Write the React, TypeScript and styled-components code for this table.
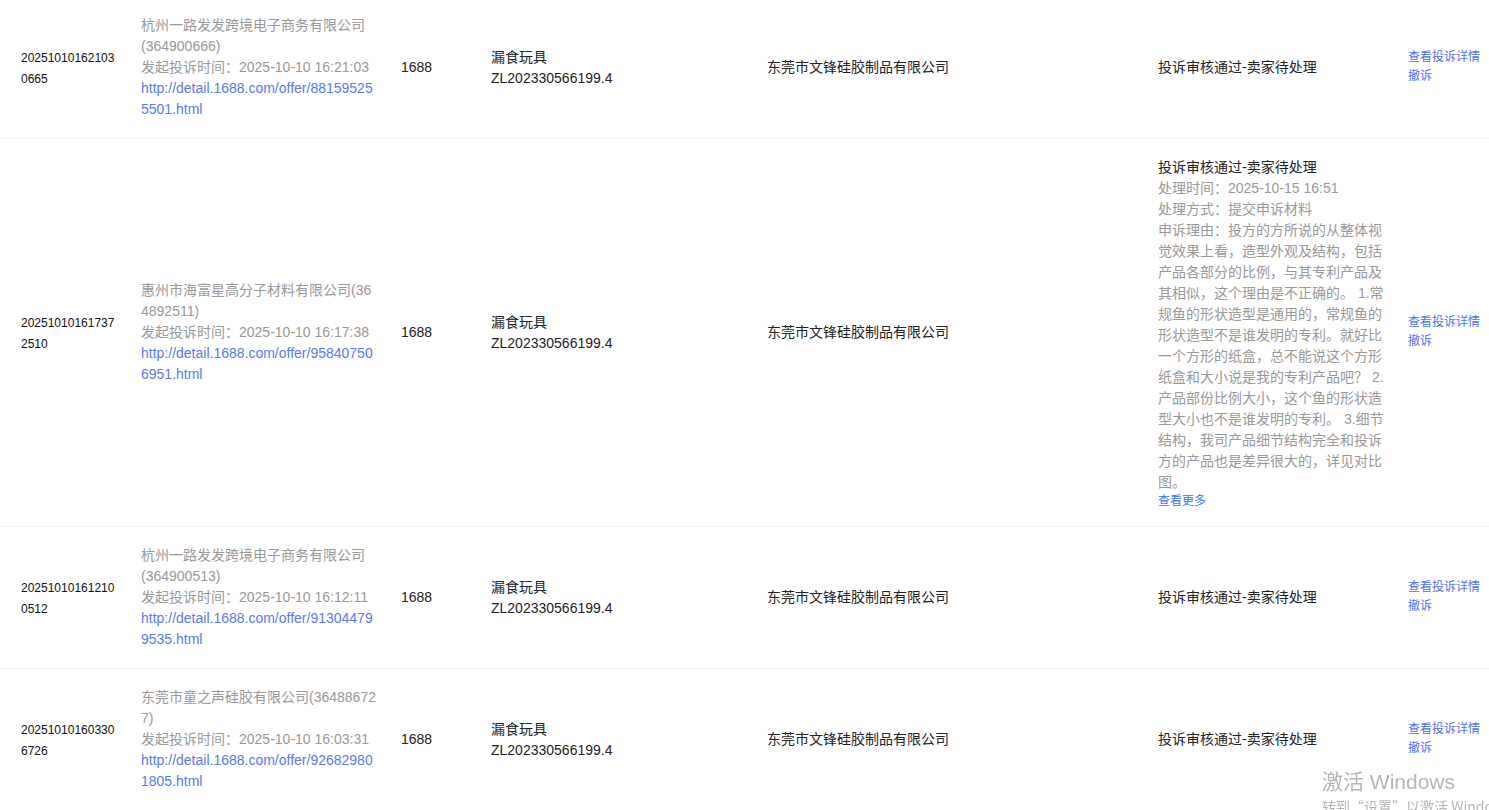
import React from "react";
import styled, { createGlobalStyle } from "styled-components";

const Global = createGlobalStyle`
  html, body { margin: 0; padding: 0; background: #fff; overflow: hidden; }
  body {
    font-family: "Liberation Sans", Arial, "Noto Sans CJK SC", sans-serif;
    color: #333;
  }
`;

const Table = styled.div`
  display: flex;
  flex-direction: column;
  margin-top: -3px;
  width: 1489px;
`;

const Row = styled.div`
  display: grid;
  grid-template-columns: 120px 260px 90px 276px 391px 250px 1fr;
  align-items: center;
  padding: 18px 0 18px 21px;
  border-bottom: 1px solid #f0f0f0;
`;

const OrderId = styled.div`
  font-size: 12px;
  line-height: 21px;
  padding-top: 2px;
  color: #111;
  width: 96px;
  word-break: break-all;
`;

const Info = styled.div`
  font-size: 14px;
  line-height: 21px;
  color: #999;
  width: 235.6px;
  word-break: break-all;
`;

const Line = styled.div``;

const Url = styled.a`
  display: block;
  color: #5b79f6;
  text-decoration: none;
`;

const Plain = styled.div`
  font-size: 14px;
  line-height: 21px;
  color: #222;
`;

const Status = styled.div`
  font-size: 14px;
  line-height: 21px;
  color: #999;
  width: 228px;
  word-break: break-all;
`;

const StatusTitle = styled.div`
  color: #222;
`;

const More = styled.a`
  display: block;
  padding-top: 1px;
  font-size: 12px;
  line-height: 14px;
  color: #3f74ff;
  text-decoration: none;
`;

const Actions = styled.div`
  display: flex;
  flex-direction: column;
  padding-bottom: 2px;
  font-size: 12px;
  line-height: 19px;
`;

const ActionLink = styled.a`
  color: #4d6ff5;
  text-decoration: none;
  white-space: nowrap;
`;

const Watermark = styled.div`
  position: fixed;
  left: 1322px;
  top: 767px;
  color: rgba(120, 120, 120, 0.55);
  font-family: "Noto Sans CJK SC", "Liberation Sans", sans-serif;
  white-space: nowrap;
  pointer-events: none;
`;

const WmTitle = styled.div`
  font-size: 21px;
  line-height: 29px;
  font-family: "Liberation Sans", "Noto Sans CJK SC", sans-serif;
`;

const WmSub = styled.div`
  font-size: 14px;
  line-height: 20px;
`;

type Item = {
  id: string;
  company: string;
  time: string;
  url: string;
  detail?: { time: string; method: string; reason: string };
};

const items: Item[] = [
  {
    id: "202510101621030665",
    company: "杭州一路发发跨境电子商务有限公司(364900666)",
    time: "2025-10-10 16:21:03",
    url: "http://detail.1688.com/offer/881595255501.html",
  },
  {
    id: "202510101617372510",
    company: "惠州市海富星高分子材料有限公司(364892511)",
    time: "2025-10-10 16:17:38",
    url: "http://detail.1688.com/offer/958407506951.html",
    detail: {
      time: "2025-10-15 16:51",
      method: "提交申诉材料",
      reason:
        "投方的方所说的从整体视觉效果上看，造型外观及结构，包括产品各部分的比例，与其专利产品及其相似，这个理由是不正确的。 1.常规鱼的形状造型是通用的，常规鱼的形状造型不是谁发明的专利。就好比一个方形的纸盒，总不能说这个方形纸盒和大小说是我的专利产品吧？ 2.产品部份比例大小，这个鱼的形状造型大小也不是谁发明的专利。 3.细节结构，我司产品细节结构完全和投诉方的产品也是差异很大的，详见对比图。",
    },
  },
  {
    id: "202510101612100512",
    company: "杭州一路发发跨境电子商务有限公司(364900513)",
    time: "2025-10-10 16:12:11",
    url: "http://detail.1688.com/offer/913044799535.html",
  },
  {
    id: "202510101603306726",
    company: "东莞市童之声硅胶有限公司(364886727)",
    time: "2025-10-10 16:03:31",
    url: "http://detail.1688.com/offer/926829801805.html",
  },
];

export default function App() {
  return (
    <>
      <Global />
      <Table>
        {items.map((it) => (
          <Row key={it.id}>
            <OrderId>{it.id}</OrderId>
            <Info>
              <Line>{it.company}</Line>
              <Line>发起投诉时间：{it.time}</Line>
              <Url href="#">{it.url}</Url>
            </Info>
            <Plain>1688</Plain>
            <Plain>
              <div>漏食玩具</div>
              <div>ZL202330566199.4</div>
            </Plain>
            <Plain>东莞市文锋硅胶制品有限公司</Plain>
            <Status>
              <StatusTitle>投诉审核通过-卖家待处理</StatusTitle>
              {it.detail && (
                <>
                  <Line>处理时间：{it.detail.time}</Line>
                  <Line>处理方式：{it.detail.method}</Line>
                  <Line>申诉理由：{it.detail.reason}</Line>
                  <More href="#">查看更多</More>
                </>
              )}
            </Status>
            <Actions>
              <ActionLink href="#">查看投诉详情</ActionLink>
              <ActionLink href="#">撤诉</ActionLink>
            </Actions>
          </Row>
        ))}
      </Table>
      <Watermark>
        <WmTitle>激活 Windows</WmTitle>
        <WmSub>转到“设置”以激活 Windows。</WmSub>
      </Watermark>
    </>
  );
}
